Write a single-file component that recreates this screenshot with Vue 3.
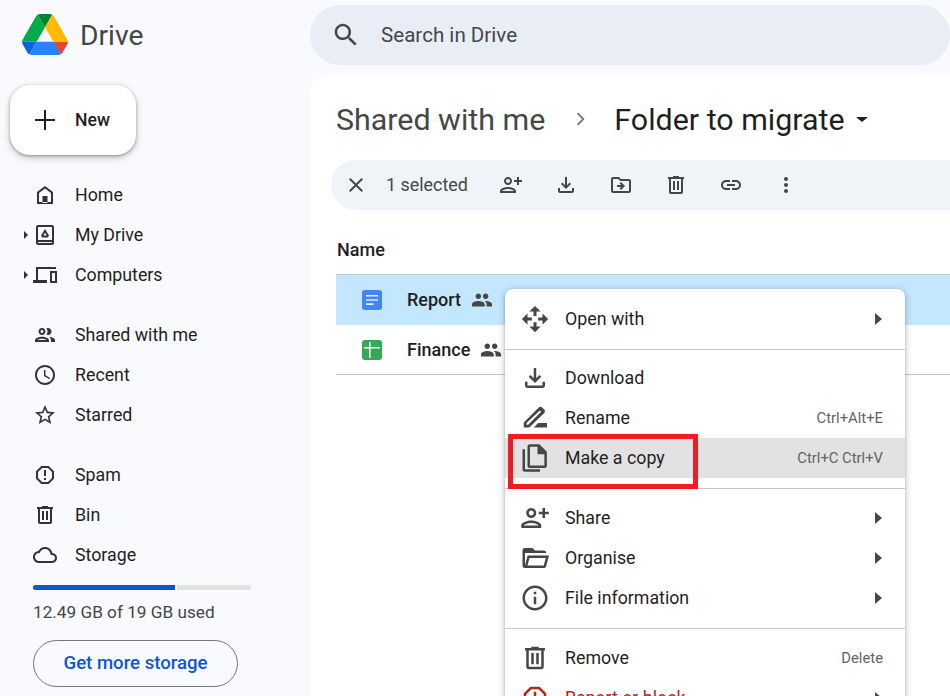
<template>
  <div class="app">
    <aside class="side">
      <div class="logo">
        <svg class="logo-mark" viewBox="0 0 87.3 78">
          <path d="m6.6 66.85 3.85 6.65c.8 1.4 1.95 2.5 3.3 3.3l13.75-23.8h-27.5c0 1.55.4 3.1 1.2 4.5z" fill="#0066da" />
          <path d="m43.65 25-13.75-23.8c-1.35.8-2.5 1.9-3.3 3.3l-25.4 44a9.06 9.06 0 0 0 -1.2 4.5h27.5z" fill="#00ac47" />
          <path d="m73.55 76.8c1.35-.8 2.5-1.9 3.3-3.3l1.6-2.75 7.65-13.25c.8-1.4 1.2-2.95 1.2-4.5h-27.502l5.852 11.5z" fill="#ea4335" />
          <path d="m43.65 25 13.75-23.8c-1.35-.8-2.9-1.2-4.5-1.2h-18.5c-1.6 0-3.15.45-4.5 1.2z" fill="#00832d" />
          <path d="m59.8 53h-32.3l-13.75 23.8c1.35.8 2.9 1.2 4.5 1.2h50.8c1.6 0 3.15-.45 4.5-1.2z" fill="#2684fc" />
          <path d="m73.4 26.5-12.7-22c-.8-1.4-1.95-2.5-3.3-3.3l-13.75 23.8 16.15 28h27.45c0-1.55-.4-3.1-1.2-4.5z" fill="#ffba00" />
        </svg>
        <span class="logo-text">Drive</span>
      </div>

      <button class="new-btn">
        <svg class="new-plus" viewBox="0 0 20 20"><path d="M9 0h2v9h9v2h-9v9H9v-9H0V9h9z" /></svg>
        <span>New</span>
      </button>

      <nav v-for="(group, i) in navGroups" :key="i" class="nav-group">
        <div v-for="item in group" :key="item.label" class="nav-item">
          <span class="nav-arrow"><i v-if="item.arrow"></i></span>
          <svg class="nav-icon" viewBox="0 0 24 24"><path :d="item.d" /></svg>
          <span class="nav-label">{{ item.label }}</span>
        </div>
      </nav>

      <div class="bar">
        <div class="bar-used"></div>
        <div class="bar-free"></div>
      </div>
      <div class="used">12.49 GB of 19 GB used</div>
      <button class="more">Get more storage</button>
    </aside>

    <div class="right">
      <div class="search">
        <svg class="ico" viewBox="0 0 24 24"><path :d="icons.search" /></svg>
        <span>Search in Drive</span>
      </div>

      <main class="panel">
        <div class="crumbs">
          <span class="crumb-a">Shared with me</span>
          <svg class="crumb-sep" viewBox="0 0 24 24"><path d="M8.6 6.4 10 5l7 7-7 7-1.4-1.4 5.6-5.6z" /></svg>
          <span class="crumb-b">Folder to migrate</span>
          <i class="caret"></i>
        </div>

        <div class="toolbar">
          <svg class="ico tb-close" viewBox="0 0 24 24"><path :d="icons.close" /></svg>
          <span class="tb-count">1 selected</span>
          <svg class="ico tb-first" viewBox="0 0 24 24"><path :d="icons.personAdd" /></svg>
          <svg class="ico" viewBox="0 0 24 24"><path :d="icons.download" /></svg>
          <svg class="ico" viewBox="0 0 24 24"><path :d="icons.move" /></svg>
          <svg class="ico" viewBox="0 0 24 24"><path :d="icons.trash" /></svg>
          <svg class="ico" viewBox="0 0 24 24"><path :d="icons.link" /></svg>
          <svg class="ico" viewBox="0 0 24 24"><path :d="icons.more" /></svg>
        </div>

        <div class="col-head">Name</div>

        <div class="row row-sel">
          <svg class="file-ico" viewBox="0 0 20 20">
            <rect width="20" height="20" rx="3" fill="#4285f4" />
            <path d="M4 5h12v1.6H4zM4 9.2h12v1.6H4zM4 13.3h7.5v1.6H4z" fill="#fff" opacity=".85" />
          </svg>
          <span>Report</span>
          <svg class="shared-ico" viewBox="0 0 24 24"><path :d="icons.people" /></svg>
        </div>
        <div class="row">
          <svg class="file-ico" viewBox="0 0 20 20">
            <rect width="20" height="20" rx="3" fill="#34a853" />
            <path d="M7 2h1.6v5H18v1.6H8.6V18H7V8.6H2V7h5z" fill="#fff" />
          </svg>
          <span>Finance</span>
          <svg class="shared-ico" viewBox="0 0 24 24"><path :d="icons.people" /></svg>
        </div>

        <div class="menu">
          <template v-for="(section, i) in menu" :key="i">
            <div v-if="i" class="menu-sep"></div>
            <div
              v-for="item in section"
              :key="item.label"
              :class="['menu-item', { hover: item.hover, danger: item.danger }]"
            >
              <svg class="menu-ico" viewBox="0 0 24 24"><path :d="item.d" /></svg>
              <span class="menu-label">{{ item.label }}</span>
              <span v-if="item.keys" class="menu-keys">{{ item.keys }}</span>
              <i v-if="item.sub" class="menu-sub"></i>
            </div>
          </template>
        </div>
        <div class="callout"></div>
      </main>
    </div>
  </div>
</template>

<script setup>
const icons = {
  search: 'M15.5 14h-.79l-.28-.27C15.41 12.59 16 11.11 16 9.5 16 5.91 13.09 3 9.5 3S3 5.91 3 9.5 5.91 16 9.5 16c1.61 0 3.09-.59 4.23-1.57l.27.28v.79l5 4.99L20.49 19l-4.99-5zm-6 0C7.01 14 5 11.99 5 9.5S7.01 5 9.5 5 14 7.01 14 9.5 11.99 14 9.5 14z',
  close: 'M19 6.41 17.59 5 12 10.59 6.41 5 5 6.41 10.59 12 5 17.59 6.41 19 12 13.41 17.59 19 19 17.59 13.41 12z',
  personAdd: 'M9 12c2.21 0 4-1.79 4-4s-1.79-4-4-4-4 1.79-4 4 1.79 4 4 4zm0-6c1.1 0 2 .9 2 2s-.9 2-2 2-2-.9-2-2 .9-2 2-2zm0 8c-2.67 0-8 1.34-8 4v2h16v-2c0-2.66-5.33-4-8-4zm-6 4c.22-.72 3.31-2 6-2 2.7 0 5.8 1.29 6 2H3zM20 7V4h-2v3h-3v2h3v3h2V9h3V7z',
  download: 'M18 15v3H6v-3H4v3c0 1.1.9 2 2 2h12c1.1 0 2-.9 2-2v-3h-2zm-1-4-1.41-1.41L13 12.17V4h-2v8.17L8.41 9.59 7 11l5 5 5-5z',
  move: 'M20 6h-8l-2-2H4c-1.1 0-2 .9-2 2v12c0 1.1.9 2 2 2h16c1.1 0 2-.9 2-2V8c0-1.1-.9-2-2-2zm0 12H4V6h5.17l2 2H20v10zM12.16 12H8v2h4.16l-1.59 1.59L12 17l4-4-4-4-1.41 1.41z',
  trash: 'M15 4V3H9v1H4v2h1v13c0 1.1.9 2 2 2h10c1.1 0 2-.9 2-2V6h1V4h-5zm2 15H7V6h10v13zM9 8h2v9H9zm4 0h2v9h-2z',
  link: 'M3.9 12c0-1.71 1.39-3.1 3.1-3.1h4V7H7c-2.76 0-5 2.24-5 5s2.24 5 5 5h4v-1.9H7c-1.71 0-3.1-1.39-3.1-3.1zM8 13h8v-2H8v2zm9-6h-4v1.9h4c1.71 0 3.1 1.39 3.1 3.1s-1.39 3.1-3.1 3.1h-4V17h4c2.76 0 5-2.24 5-5s-2.24-5-5-5z',
  more: 'M12 8c1.1 0 2-.9 2-2s-.9-2-2-2-2 .9-2 2 .9 2 2 2zm0 2c-1.1 0-2 .9-2 2s.9 2 2 2 2-.9 2-2-.9-2-2-2zm0 6c-1.1 0-2 .9-2 2s.9 2 2 2 2-.9 2-2-.9-2-2-2z',
  people: 'M16 11c1.66 0 2.99-1.34 2.99-3S17.66 5 16 5c-1.66 0-3 1.34-3 3s1.34 3 3 3zm-8 0c1.66 0 2.99-1.34 2.99-3S9.66 5 8 5C6.34 5 5 6.34 5 8s1.34 3 3 3zm0 2c-2.33 0-7 1.17-7 3.5V19h14v-2.5c0-2.33-4.67-3.5-7-3.5zm8 0c-.29 0-.62.02-.97.05 1.16.84 1.97 1.97 1.97 3.45V19h6v-2.5c0-2.33-4.67-3.5-7-3.5z',
  peopleOutline: 'M9 13.75c-2.34 0-7 1.17-7 3.5V19h14v-1.75c0-2.33-4.66-3.5-7-3.5zM4.34 17c.84-.58 2.87-1.25 4.66-1.25s3.82.67 4.66 1.25H4.34zM9 12c1.93 0 3.5-1.57 3.5-3.5S10.93 5 9 5 5.5 6.57 5.5 8.5 7.07 12 9 12zm0-5c.83 0 1.5.67 1.5 1.5S9.83 10 9 10s-1.5-.67-1.5-1.5S8.17 7 9 7zm7.04 6.81c1.16.84 1.96 1.96 1.96 3.44V19h4v-1.75c0-2.02-3.5-3.17-5.96-3.44zM15 12c1.93 0 3.5-1.57 3.5-3.5S16.93 5 15 5c-.54 0-1.04.13-1.5.35.63.89 1 1.98 1 3.15s-.37 2.26-1 3.15c.46.22.96.35 1.5.35z',
  report: 'M15.73 3H8.27L3 8.27v7.46L8.27 21h7.46L21 15.73V8.27L15.73 3zM19 14.9 14.9 19H9.1L5 14.9V9.1L9.1 5h5.8L19 9.1v5.8zM11 7h2v6h-2zM11 15h2v2h-2z'
}

const navGroups = [
  [
    { label: 'Home', d: 'M12 3 4 9v12h16V9zM6 19v-9l6-4.5 6 4.5v9zM9.5 13h5v7h-5z' },
    { label: 'My Drive', arrow: true, d: 'M5 2h14c1.1 0 2 .9 2 2v16c0 1.1-.9 2-2 2H5c-1.1 0-2-.9-2-2V4c0-1.1.9-2 2-2zm0 2v13h14V4H5zm0 15v1h14v-1H5zM12 6l4 6.5-1.2 2H9.2L8 12.5 12 6zm0 3.6-1.6 2.9h3.2L12 9.6z' },
    { label: 'Computers', arrow: true, d: 'M3 4h20v2H5v11h9v3H0v-3h3zM17 8h7v12h-7zm2 2v8h3v-8z' }
  ],
  [
    { label: 'Shared with me', d: icons.peopleOutline },
    { label: 'Recent', d: 'M11.99 2C6.47 2 2 6.48 2 12s4.47 10 9.99 10C17.52 22 22 17.52 22 12S17.52 2 11.99 2zM12 20c-4.42 0-8-3.58-8-8s3.58-8 8-8 8 3.58 8 8-3.58 8-8 8zm.5-13H11v6l5.25 3.15.75-1.23-4.5-2.67z' },
    { label: 'Starred', d: 'M22 9.24l-7.19-.62L12 2 9.19 8.63 2 9.24l5.46 4.73L5.82 21 12 17.27 18.18 21l-1.63-7.03L22 9.24zM12 15.4l-3.76 2.27 1-4.28-3.32-2.88 4.38-.38L12 6.1l1.71 4.04 4.38.38-3.32 2.88 1 4.28L12 15.4z' }
  ],
  [
    { label: 'Spam', d: icons.report },
    { label: 'Bin', d: icons.trash },
    { label: 'Storage', d: 'M19.35 10.04C18.67 6.59 15.64 4 12 4 9.11 4 6.6 5.64 5.35 8.04 2.34 8.36 0 10.91 0 14c0 3.31 2.69 6 6 6h13c2.76 0 5-2.24 5-5 0-2.64-2.05-4.78-4.65-4.96zM19 18H6c-2.21 0-4-1.79-4-4 0-2.05 1.53-3.76 3.56-3.97l1.07-.11.5-.95C8.08 7.14 9.94 6 12 6c2.62 0 4.88 1.86 5.39 4.43l.3 1.5 1.53.11c1.56.1 2.78 1.41 2.78 2.96 0 1.65-1.35 3-3 3z' }
  ]
]

const menu = [
  [
    { label: 'Open with', sub: true, d: 'M12 1.5 16.5 6h-3.3v3.5h-2.4V6H7.5zM12 22.5 7.5 18h3.3v-3.5h2.4V18h3.3zM1.5 12 6 7.5v3.3h3.5v2.4H6v3.3zM22.5 12 18 16.5v-3.3h-3.5v-2.4H18V7.5z' }
  ],
  [
    { label: 'Download', d: icons.download },
    { label: 'Rename', keys: 'Ctrl+Alt+E', d: 'M3 19.5v-4L14.8 3.7a2.2 2.2 0 0 1 3.1 0l1.3 1.3a2.2 2.2 0 0 1 0 3.1L7.4 19.5zM5.2 17.3h1.3L16.9 6.9l-1-1L5.2 16zM14.5 16h7.1v3.5H11z' },
    { label: 'Make a copy', keys: 'Ctrl+C Ctrl+V', hover: true, d: 'M8 1h7.5l6 6v11a2 2 0 0 1-2 2H8a2 2 0 0 1-2-2V3a2 2 0 0 1 2-2zm0 2v15h11.5V9H14V3zM2 5h2v16h12v2H4a2 2 0 0 1-2-2z' }
  ],
  [
    { label: 'Share', sub: true, d: icons.personAdd },
    { label: 'Organise', sub: true, d: 'M6.1 10 4 18V8h17a2 2 0 0 0-2-2h-7l-2-2H4a2 2 0 0 0-2 2v12a2 2 0 0 0 2 2h15c.9 0 1.7-.6 1.9-1.5L23.2 10H6.1M19 18H6l1.6-6h13L19 18z' },
    { label: 'File information', sub: true, d: 'M11 7h2v2h-2zm0 4h2v6h-2zm1-9C6.48 2 2 6.48 2 12s4.48 10 10 10 10-4.48 10-10S17.52 2 12 2zm0 18c-4.41 0-8-3.59-8-8s3.59-8 8-8 8 3.59 8 8-3.59 8-8 8z' }
  ],
  [
    { label: 'Remove', keys: 'Delete', d: icons.trash },
    { label: 'Report or block', sub: true, danger: true, d: icons.report }
  ]
]
</script>

<style>
html, body { margin: 0; background: #f8fafd; }
</style>

<style scoped>
.app {
  display: flex;
  height: 696px;
  overflow: hidden;
  background: #f8fafd;
  color: #1f1f1f;
  font-family: Roboto, "Liberation Sans", sans-serif;
}

/* sidebar */
.side {
  flex: 0 0 310px;
  box-sizing: border-box;
  padding: 14px 0 0 10px;
}
.logo { display: flex; align-items: center; height: 41px; padding-left: 12px; }
.logo-mark { width: 46px; height: 41px; }
.logo-text { margin-left: 12px; padding-top: 2px; font-size: 28.2px; color: #444746; }

.new-btn {
  display: flex;
  align-items: center;
  width: 126px;
  height: 70px;
  margin-top: 30px;
  padding: 0 0 0 25px;
  border: 0;
  border-radius: 20px;
  background: #fff;
  box-shadow: 0 1px 3px rgba(60, 64, 67, .45), 0 3px 6px 1px rgba(60, 64, 67, .2);
  font: 500 17.6px Roboto, sans-serif;
  color: #1f1f1f;
}
.new-plus { width: 20px; height: 20px; margin-right: 20px; fill: #1f1f1f; }

.nav-group { margin-bottom: 20px; }
.nav-group:first-of-type { margin-top: 20px; }
.nav-group:last-of-type { margin-bottom: 0; }
.nav-item {
  display: flex;
  align-items: center;
  height: 40px;
  font-size: 17.8px;
}
.nav-label { padding-bottom: 2px; }
.nav-arrow { display: flex; align-items: center; flex: none; width: 23px; height: 10px; }
.nav-arrow i {
  margin-left: 14px;
  border-left: 4px solid #333;
  border-top: 4px solid transparent;
  border-bottom: 4px solid transparent;
}
.nav-icon { flex: none; width: 24px; height: 24px; margin-right: 18px; fill: #333; overflow: visible; }

.bar { display: flex; gap: 2px; width: 218px; height: 5px; margin: 10px 0 0 23px; }
.bar-used { width: 142px; background: #0b57d0; border-radius: 3px 0 0 3px; }
.bar-free { flex: 1; background: #e1e3e1; border-radius: 0 3px 3px 0; }
.used { margin: 12px 0 0 23px; font-size: 17.2px; line-height: 20px; color: #444746; }
.more {
  display: block;
  width: 205px;
  height: 47px;
  margin: 18px 0 0 23px;
  padding: 0 0 2px;
  border: 1px solid #747775;
  border-radius: 24px;
  background: transparent;
  font: 500 18.6px Roboto, sans-serif;
  color: #0b57d0;
}

/* top + main */
.right { flex: 1; min-width: 0; display: flex; flex-direction: column; }
.search {
  display: flex;
  align-items: center;
  flex: 0 0 60px;
  margin-top: 5px;
  padding-left: 21px;
  border-radius: 30px;
  background: #e9eef6;
  font-size: 20.6px;
  color: #444746;
}
.ico { flex: none; width: 24px; height: 24px; fill: #444746; }
.search .ico { width: 30px; height: 30px; margin-right: 20px; }

.panel {
  position: relative;
  flex: 1;
  margin: 10px 0 0 1px;
  padding: 22px 0 0 25px;
  border-radius: 16px 0 0 0;
  background: #fff;
}
.crumbs { display: flex; align-items: center; height: 44px; font-size: 30.4px; }
.crumb-a { color: #444746; }
.crumb-sep { width: 22px; height: 22px; margin: 0 23px 0 24px; fill: #747775; }
.crumb-b { color: #1f1f1f; }
.caret {
  margin-left: 11px;
  border-top: 5px solid #1f1f1f;
  border-left: 6px solid transparent;
  border-right: 6px solid transparent;
}

.toolbar {
  display: flex;
  align-items: center;
  gap: 31px;
  height: 50px;
  margin: 19px -40px 0 -5px;
  padding-left: 13px;
  border-radius: 25px;
  background: #f0f4f9;
}
.tb-close { margin-right: -13px; }
.tb-count { margin-right: -1px; padding-bottom: 2px; font-size: 17.9px; color: #444746; }
.tb-first { margin-left: 1px; }

.col-head { margin: 28px 0 0 1px; height: 24px; line-height: 24px; font-size: 18px; font-weight: 500; }

.row {
  display: flex;
  align-items: center;
  box-sizing: border-box;
  height: 50px;
  padding-left: 26px;
  border-bottom: 1px solid #c7c7c7;
  font-size: 18px;
  font-weight: 500;
}
.row-sel { height: 51px; margin-top: 12px; border-top: 1px solid #c7c7c7; border-bottom: 0; background: #c2e7ff; }
.row-sel span { padding-bottom: 2px; }
.file-ico { width: 20px; height: 20px; margin-right: 25px; }
.shared-ico { width: 22px; height: 22px; margin-left: 10px; fill: #444746; }

/* context menu */
.menu {
  position: absolute;
  left: 194px;
  top: 214px;
  width: 400px;
  padding: 10px 0;
  border-radius: 8px;
  background: #fff;
  box-shadow: 0 2px 6px 2px rgba(60, 64, 67, .18), 0 1px 3px rgba(60, 64, 67, .3);
}
.menu-sep { height: 1px; margin: 10px 0 9px; background: #c7c7c7; }
.menu-sep:nth-child(2) { margin-bottom: 8px; }
.menu-item {
  display: flex;
  align-items: center;
  height: 40px;
  padding: 0 22px 0 15px;
  font-size: 17.8px;
}
.menu-item.hover { background: #e2e2e2; }
.menu-ico { flex: none; width: 30px; height: 30px; margin-right: 15px; fill: #444746; }
.menu-label { flex: 1; padding-bottom: 2px; }
.menu-keys { font-size: 14.8px; color: #5f6368; }
.menu-sub {
  margin-right: 1px;
  border-left: 7px solid #444746;
  border-top: 6px solid transparent;
  border-bottom: 6px solid transparent;
}
.menu-item.danger { color: #b3261e; }
.menu-item.danger .menu-ico { fill: #b3261e; }

.callout {
  position: absolute;
  left: 197px;
  top: 359px;
  box-sizing: border-box;
  width: 190px;
  height: 55px;
  border: 5px solid #ee1c25;
}
</style>
